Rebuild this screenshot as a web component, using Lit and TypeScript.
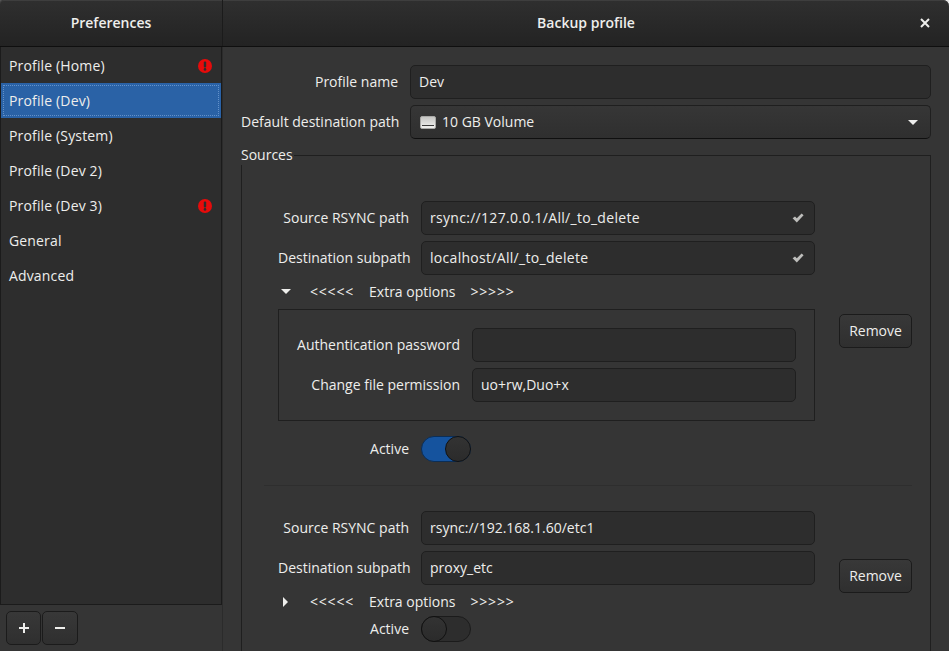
import { LitElement, html, css, nothing } from 'lit';
import { customElement, state } from 'lit/decorators.js';

const PROFILES = [
  { name: 'Profile (Home)', warn: true },
  { name: 'Profile (Dev)', selected: true },
  { name: 'Profile (System)' },
  { name: 'Profile (Dev 2)' },
  { name: 'Profile (Dev 3)', warn: true },
  { name: 'General' },
  { name: 'Advanced' },
];

const warnIcon = html`<svg class="warn" width="14" height="14" viewBox="0 0 14 14">
  <circle cx="7" cy="7" r="7" fill="#e60b0b"></circle>
  <rect x="5.8" y="2.4" width="2.4" height="6" rx="1" fill="#2d2d2d"></rect>
  <circle cx="7" cy="10.4" r="1.3" fill="#2d2d2d"></circle>
</svg>`;

const checkIcon = html`<svg class="check" width="12" height="10" viewBox="0 0 12 10">
  <path d="M0.6 5.2 L3 3.4 L4.8 5.2 L9.6 0.6 L11.6 2.2 L4.8 9.6 Z" fill="#bdbdbb"></path>
</svg>`;

const driveIcon = html`<svg class="drive" width="16" height="13" viewBox="0 0 16 13">
  <defs>
    <linearGradient id="drive-fill" x1="0" y1="0" x2="0" y2="1">
      <stop offset="0" stop-color="#c4c4c2"></stop>
      <stop offset="1" stop-color="#f2f2f0"></stop>
    </linearGradient>
  </defs>
  <rect x="0.5" y="0.5" width="15" height="12" rx="1.5" fill="url(#drive-fill)" stroke="#a8a8a6"></rect>
  <rect x="2" y="9" width="12" height="1" fill="#3a3a3a"></rect>
</svg>`;

@customElement('app-root')
export class AppRoot extends LitElement {
  static styles = css`
    :host {
      display: block;
      width: 949px;
      height: 651px;
      overflow: hidden;
      /* desktop showing behind the rounded window corners */
      background: linear-gradient(to right, #555555 50%, #e8e8e8 50%);
      color: #eeeeec;
      font-family: 'Open Sans', 'Noto Sans', sans-serif;
      font-size: 14px;
      line-height: 20px;
    }
    * {
      box-sizing: border-box;
    }
    .header {
      display: grid;
      grid-template-columns: 223px 1fr;
      height: 47px;
      background: linear-gradient(#2f2f2f, #232323);
      border-bottom: 1px solid #0f0f0f;
      border-radius: 4px 6px 0 0;
      box-shadow: inset 0 1px #3e3e3e;
      font-weight: 600;
    }
    .header > div {
      display: flex;
      align-items: center;
      justify-content: center;
      position: relative;
    }
    .header .left {
      border-right: 1px solid #1b1b1b;
    }
    .close {
      position: absolute;
      right: 19px;
      top: 18px;
      width: 10px;
      height: 10px;
    }
    .main {
      display: grid;
      grid-template-columns: 223px 1fr;
      grid-template-rows: 604px;
      background: #353535;
    }
    .side {
      display: flex;
      flex-direction: column;
      border-right: 1px solid #2b2b2b;
    }
    .list {
      flex: 1;
      padding-top: 1px;
      background: #2d2d2d;
      border: 1px solid #1b1b1b;
      border-top: 0;
      letter-spacing: 0.15px;
    }
    .row {
      display: flex;
      align-items: center;
      justify-content: space-between;
      height: 35px;
      padding: 0 9px 0 8px;
    }
    .row.selected {
      background: #2a62a6;
      outline: 1px dotted #6391c9;
      outline-offset: -3px;
    }
    .tools {
      display: flex;
      gap: 1px;
      padding: 6px;
    }
    .btn {
      display: flex;
      align-items: center;
      justify-content: center;
      height: 34px;
      background: linear-gradient(#383838, #2f2f2f);
      border: 1px solid #1b1b1b;
      border-radius: 5px;
    }
    .tools .btn {
      width: 35px;
    }
    .tools .btn:last-child {
      width: 36px;
    }
    .content {
      padding: 18px 18px 0 18px;
      min-width: 0;
    }
    .line {
      display: flex;
      align-items: center;
      gap: 12px;
      margin-bottom: 6px;
    }
    .line label {
      text-align: right;
      white-space: nowrap;
      flex: none;
    }
    .top label {
      width: 157px;
    }
    .entry {
      flex: 1;
      display: flex;
      align-items: center;
      justify-content: space-between;
      height: 34px;
      padding: 0 10px 0 8px;
      background: #2d2d2d;
      border: 1px solid #1f1f1f;
      border-radius: 5px;
      min-width: 0;
    }
    .entry.wide span {
      letter-spacing: 0.3px;
    }
    .combo {
      padding-left: 9px;
      padding-right: 12px;
      background: linear-gradient(#363636, #2f2f2f);
      border-bottom-color: #0f0f0f;
    }
    .combo .value {
      display: flex;
      align-items: center;
      gap: 6px;
    }
    .caret {
      width: 0;
      height: 0;
      border-left: 5px solid transparent;
      border-right: 5px solid transparent;
      border-top: 5px solid #eeeeec;
    }
    fieldset {
      margin: 6px 0 0 0;
      padding: 0;
      min-width: 0;
      border: 1px solid #1f1f1f;
      height: 520px;
    }
    legend {
      padding: 0 1px 0 0;
      margin-left: -1px;
    }
    .source {
      display: grid;
      grid-template-columns: 537px 73px;
      column-gap: 24px;
      align-items: center;
      margin: 0 18px 0 22px;
      padding-left: 14px;
    }
    .source > .btn {
      margin-bottom: 1px;
    }
    .source + .source {
      border-top: 1px solid #2e2e2e;
      margin-top: 23px;
      padding-top: 25px;
    }
    .first {
      padding-top: 36px;
    }
    .fields .line label {
      width: 131px;
    }
    .expander {
      display: flex;
      align-items: center;
      height: 21px;
      padding-left: 3px;
    }
    .expander .arrow {
      width: 25px;
    }
    .expander .arrow i {
      display: block;
      width: 0;
      height: 0;
    }
    .arrow .down {
      border-left: 5px solid transparent;
      border-right: 5px solid transparent;
      border-top: 5px solid #eeeeec;
    }
    .arrow .right {
      border-top: 5px solid transparent;
      border-bottom: 5px solid transparent;
      border-left: 5px solid #eeeeec;
      margin-left: 2px;
    }
    .expander .marks {
      margin-left: 4px;
      letter-spacing: 0.8px;
    }
    .expander .mid {
      margin: 0 11px 0 15px;
    }
    .extra {
      margin-top: 7px;
      padding: 18px;
      border: 1px solid #1f1f1f;
    }
    .fields .extra .line label {
      width: 163px;
    }
    .extra .line:last-child {
      margin-bottom: 0;
    }
    .active {
      display: flex;
      align-items: center;
      gap: 12px;
      height: 26px;
      margin-top: 15px;
    }
    .active label {
      width: 131px;
      text-align: right;
    }
    .compact .active {
      margin-top: 4px;
    }
    .switch {
      display: flex;
      width: 50px;
      height: 26px;
      border: 1px solid #1b1b1b;
      border-radius: 13px;
      background: #2d2d2d;
    }
    .switch.on {
      background: #15539e;
      justify-content: flex-end;
      border-color: #0b2e57;
    }
    .knob {
      width: 26px;
      height: 26px;
      margin: -1px;
      border-radius: 50%;
      background: linear-gradient(#333333, #2b2b2b);
      border: 1px solid #111111;
    }
  `;

  @state() profiles = PROFILES;

  private renderRow(label: string, value: string, check = false, wide = false) {
    return html`<div class="line">
      <label>${label}</label>
      <div class=${wide ? 'entry wide' : 'entry'}><span>${value}</span>${check ? checkIcon : nothing}</div>
    </div>`;
  }

  private renderExpander(open: boolean) {
    return html`<div class="expander">
      <div class="arrow"><i class=${open ? 'down' : 'right'}></i></div>
      <span class="marks">&lt;&lt;&lt;&lt;&lt;</span>
      <span class="mid">Extra options</span>
      <span class="marks">&gt;&gt;&gt;&gt;&gt;</span>
    </div>`;
  }

  private renderSwitch(on: boolean) {
    return html`<div class="active">
      <label>Active</label>
      <div class=${on ? 'switch on' : 'switch'}><div class="knob"></div></div>
    </div>`;
  }

  render() {
    return html`
      <div class="header">
        <div class="left">Preferences</div>
        <div>
          Backup profile
          <svg class="close" viewBox="0 0 10 10">
            <path d="M1 1 L9 9 M9 1 L1 9" stroke="#eeeeec" stroke-width="2"></path>
          </svg>
        </div>
      </div>
      <div class="main">
        <div class="side">
          <div class="list">
            ${this.profiles.map(
              (p) => html`<div class=${p.selected ? 'row selected' : 'row'}>
                <span>${p.name}</span>${p.warn ? warnIcon : nothing}
              </div>`,
            )}
          </div>
          <div class="tools">
            <div class="btn">
              <svg width="12" height="12" viewBox="0 0 12 12">
                <path d="M6 1 V11 M1 6 H11" stroke="#eeeeec" stroke-width="2"></path>
              </svg>
            </div>
            <div class="btn">
              <svg width="12" height="12" viewBox="0 0 12 12">
                <path d="M1 6 H11" stroke="#eeeeec" stroke-width="2"></path>
              </svg>
            </div>
          </div>
        </div>
        <div class="content">
          <div class="top">
            ${this.renderRow('Profile name', 'Dev')}
            <div class="line">
              <label>Default destination path</label>
              <div class="entry combo">
                <span class="value">${driveIcon}10 GB Volume</span>
                <i class="caret"></i>
              </div>
            </div>
          </div>
          <fieldset>
            <legend>Sources</legend>
            <div class="source first">
              <div class="fields">
                ${this.renderRow('Source RSYNC path', 'rsync://127.0.0.1/All/_to_delete', true, true)}
                ${this.renderRow('Destination subpath', 'localhost/All/_to_delete', true, true)}
                ${this.renderExpander(true)}
                <div class="extra">
                  ${this.renderRow('Authentication password', '')}
                  ${this.renderRow('Change file permission', 'uo+rw,Duo+x')}
                </div>
                ${this.renderSwitch(true)}
              </div>
              <div class="btn">Remove</div>
            </div>
            <div class="source compact">
              <div class="fields">
                ${this.renderRow('Source RSYNC path', 'rsync://192.168.1.60/etc1')}
                ${this.renderRow('Destination subpath', 'proxy_etc')}
                ${this.renderExpander(false)}
                ${this.renderSwitch(false)}
              </div>
              <div class="btn">Remove</div>
            </div>
          </fieldset>
        </div>
      </div>
    `;
  }
}
